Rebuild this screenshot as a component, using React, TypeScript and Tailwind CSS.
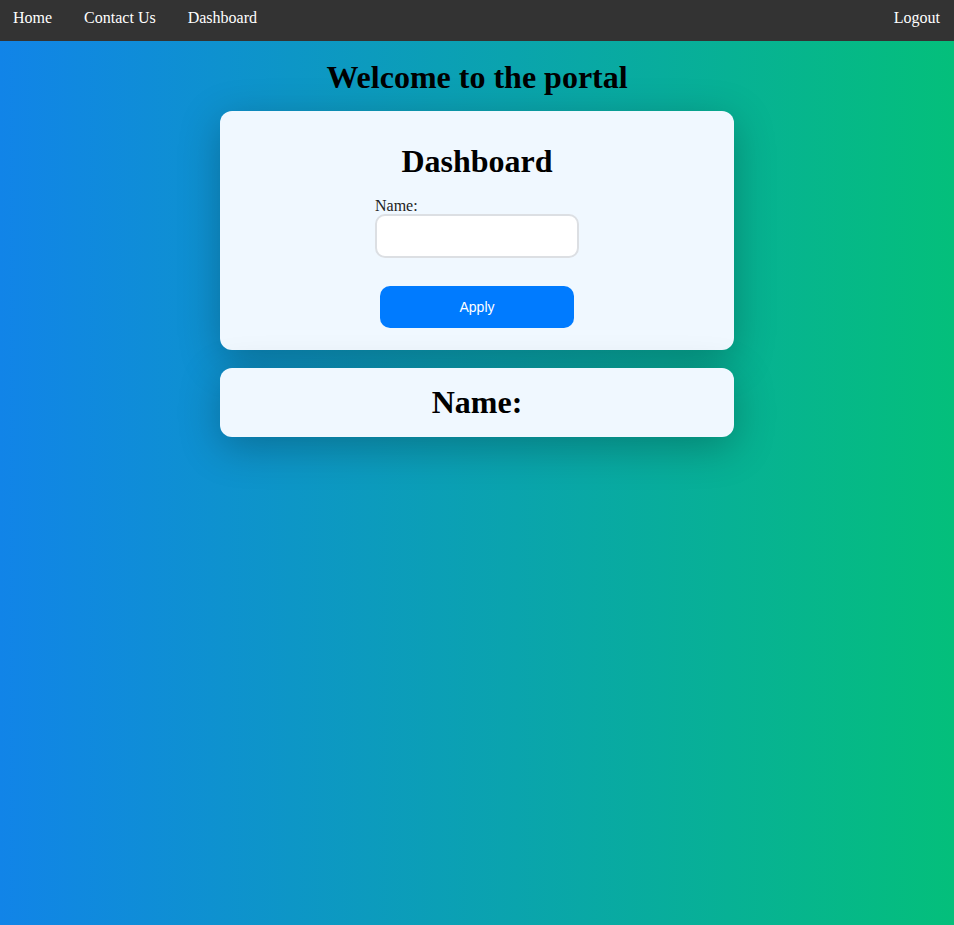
export default function App() {
  return (
    <div className="min-h-[925px] bg-[linear-gradient(to_right,#1184e8,#04bf7b)] font-['Liberation_Serif',serif] text-black">
      {/* Top nav */}
      <nav className="h-[41px] bg-[#333333] flex items-start justify-between pt-[9px] pl-[13px] pr-[14px] text-white text-[16px] leading-[18px]">
        <div className="flex gap-[32px]">
          <a href="#">Home</a>
          <a href="#">Contact Us</a>
          <a href="#">Dashboard</a>
        </div>
        <a href="#">Logout</a>
      </nav>

      <h1 className="text-center text-[32px] font-bold leading-[37px] mt-[18px]">Welcome to the portal</h1>

      <div className="w-[514px] mx-auto mt-[15px] flex flex-col gap-[18px]">
        {/* Form card */}
        <div className="bg-[#f0f8ff] rounded-[12px] shadow-[0_10px_40px_rgba(0,0,0,0.25)] pt-[32px] pb-[22px] flex flex-col items-center">
          <h2 className="text-[32px] font-bold leading-[37px]">Dashboard</h2>
          <div className="w-[204px] mt-[17px] flex flex-col">
            <label className="text-[16px] leading-[17px] text-[#222]">Name:</label>
            <input
              type="text"
              className="h-[44px] w-[204px] bg-white border-2 border-[#dcdfe3] rounded-[10px] px-2 outline-none"
            />
            <button className="mt-[28px] mx-auto w-[194px] h-[42px] bg-[#007bff] rounded-[10px] text-white text-[14px] font-['Liberation_Sans',sans-serif]">
              Apply
            </button>
          </div>
        </div>

        {/* Result card */}
        <div className="bg-[#f0f8ff] rounded-[12px] shadow-[0_10px_40px_rgba(0,0,0,0.25)] py-[16px] flex justify-center">
          <h2 className="text-[32px] font-bold leading-[37px]">Name:</h2>
        </div>
      </div>
    </div>
  );
}
